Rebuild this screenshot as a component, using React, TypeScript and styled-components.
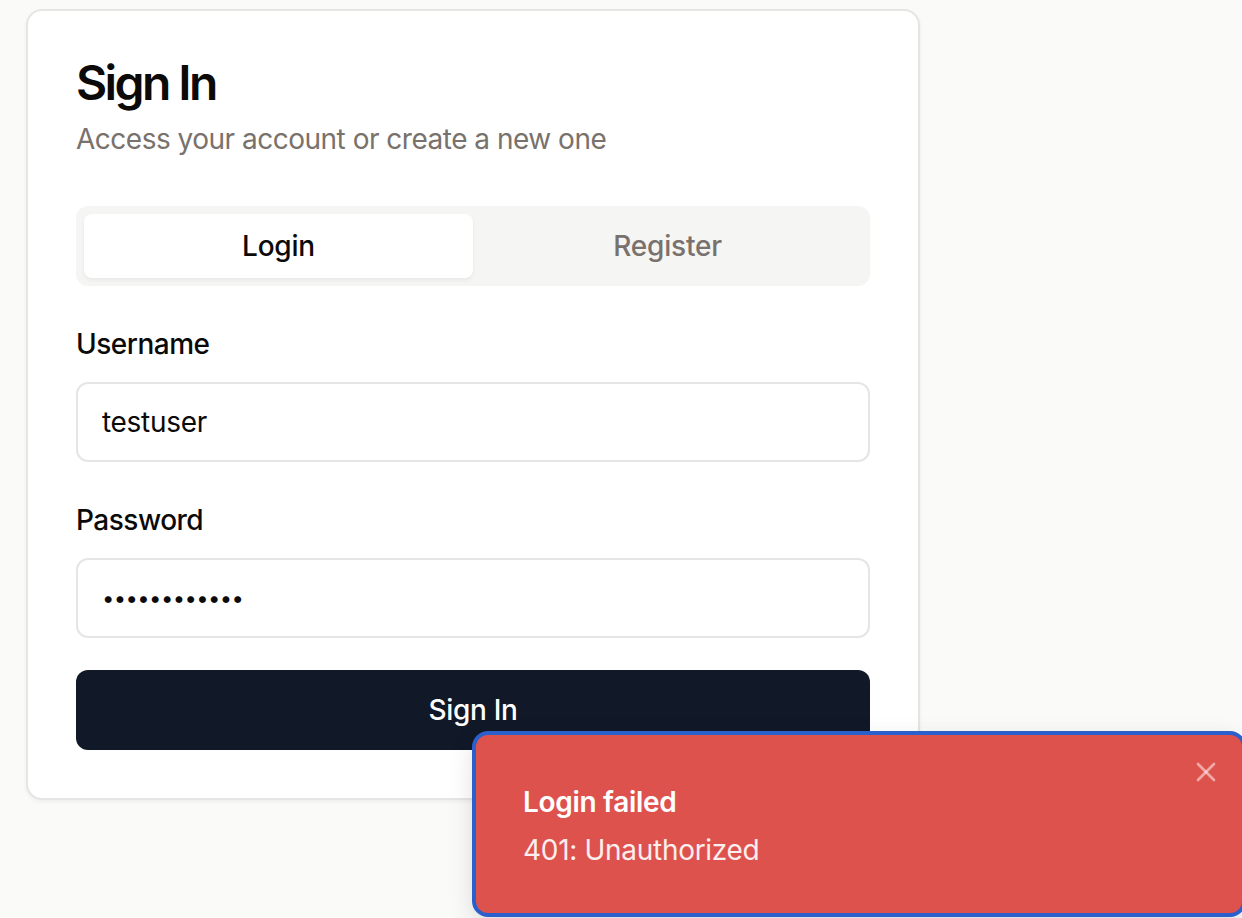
import React from "react";
import styled, { createGlobalStyle } from "styled-components";

const GlobalStyle = createGlobalStyle`
  html, body { margin: 0; padding: 0; background: #fafaf9; }
  body { font-family: Inter, "Noto Sans", "Liberation Sans", sans-serif; color: #0c0a09; -webkit-font-smoothing: antialiased; }
  * { box-sizing: border-box; }
`;

const Page = styled.div`
  min-height: 918px;
  padding: 9px 0 0 26px;
  position: relative;
  overflow: hidden;
`;

const Card = styled.div`
  width: 894px;
  background: #ffffff;
  border: 2px solid #e7e5e4;
  border-radius: 16px;
  box-shadow: 0 2px 4px rgba(0, 0, 0, 0.05);
  padding: 48px;
  display: flex;
  flex-direction: column;
`;

const Title = styled.h1`
  margin: 0;
  font-size: 48px;
  line-height: 48px;
  font-weight: 600;
  letter-spacing: -2.6px;
`;

const Subtitle = styled.p`
  margin: 12px 0 0;
  font-size: 28px;
  line-height: 40px;
  color: #78716c;
  letter-spacing: -0.5px;
`;

const TabList = styled.div`
  margin-top: 47px;
  height: 80px;
  background: #f5f5f4;
  border-radius: 12px;
  padding: 8px;
  display: grid;
  grid-template-columns: 1fr 1fr;
`;

const Tab = styled.button<{ $active?: boolean }>`
  border: none;
  border-radius: 8px;
  font-family: inherit;
  font-size: 28px;
  font-weight: 500;
  letter-spacing: -0.2px;
  background: ${(p) => (p.$active ? "#ffffff" : "transparent")};
  color: ${(p) => (p.$active ? "#0c0a09" : "#78716c")};
  box-shadow: ${(p) => (p.$active ? "0 2px 4px rgba(0,0,0,0.06)" : "none")};
`;

const Form = styled.div`
  display: flex;
  flex-direction: column;
`;

const Label = styled.label`
  display: block;
  font-size: 28px;
  line-height: 40px;
  font-weight: 500;
  letter-spacing: -0.5px;
  margin-top: 38px;
  margin-bottom: 18px;
`;

const Input = styled.input<{ $secret?: boolean }>`
  height: 80px;
  width: 100%;
  border: 2px solid #e7e5e4;
  border-radius: 12px;
  padding: 0 24px;
  font-family: inherit;
  font-size: ${(p) => (p.$secret ? "22px" : "28px")};
  letter-spacing: ${(p) => (p.$secret ? "-0.6px" : "-0.3px")};
  color: #0c0a09;
  background: #fff;
  outline: none;
`;

const Button = styled.button`
  margin-top: 32px;
  height: 80px;
  border: none;
  border-radius: 12px;
  background: #111827;
  color: #ffffff;
  font-family: inherit;
  font-size: 28px;
  font-weight: 500;
  letter-spacing: -0.3px;
`;

const Toast = styled.div`
  position: absolute;
  left: 472px;
  top: 731px;
  width: 774px;
  height: 186px;
  background: #de524e;
  border: 4px solid #2b5fcc;
  border-radius: 16px;
  padding: 47px 64px 0 47px;
  color: #ffffff;
  box-shadow: 0 8px 24px rgba(0, 0, 0, 0.12);
`;

const ToastTitle = styled.div`
  font-size: 28px;
  line-height: 40px;
  font-weight: 600;
  letter-spacing: -0.3px;
`;

const ToastDesc = styled.div`
  margin-top: 8px;
  font-size: 28px;
  line-height: 40px;
  letter-spacing: -0.3px;
  opacity: 0.9;
`;

const Close = styled.button`
  position: absolute;
  top: 17px;
  right: 16px;
  width: 40px;
  height: 40px;
  border: none;
  background: transparent;
  padding: 0;
  display: flex;
  align-items: center;
  justify-content: center;
  color: rgba(255, 255, 255, 0.5);
`;

export default function App() {
  return (
    <Page>
      <GlobalStyle />
      <Card>
        <Title>Sign In</Title>
        <Subtitle>Access your account or create a new one</Subtitle>
        <TabList>
          <Tab $active>Login</Tab>
          <Tab>Register</Tab>
        </TabList>
        <Form>
          <Label>Username</Label>
          <Input defaultValue="testuser" />
          <Label>Password</Label>
          <Input $secret type="password" defaultValue="password1234" />
          <Button>Sign In</Button>
        </Form>
      </Card>
      <Toast>
        <ToastTitle>Login failed</ToastTitle>
        <ToastDesc>401: Unauthorized</ToastDesc>
        <Close>
          <svg width="32" height="32" viewBox="0 0 24 24" fill="none" stroke="currentColor" strokeWidth="2" strokeLinecap="round" strokeLinejoin="round">
            <path d="M18 6 6 18" />
            <path d="m6 6 12 12" />
          </svg>
        </Close>
      </Toast>
    </Page>
  );
}
